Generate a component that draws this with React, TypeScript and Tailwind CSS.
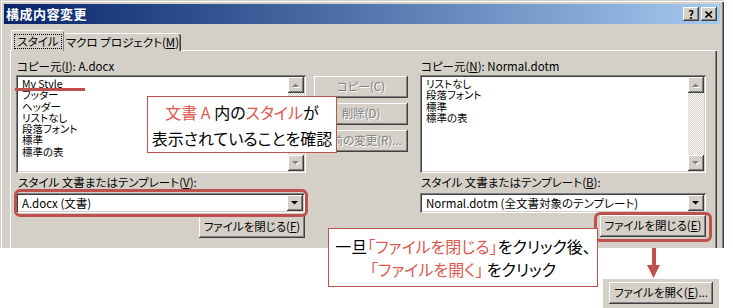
import React from "react";

const raised =
  "shadow-[inset_-1px_-1px_#404040,inset_1px_1px_#ffffff,inset_-2px_-2px_#808080,inset_2px_2px_#d4d0c8]";
const sunken =
  "shadow-[inset_1px_1px_#808080,inset_-1px_-1px_#ffffff,inset_2px_2px_#404040,inset_-2px_-2px_#d4d0c8]";
const dither =
  "bg-[image:repeating-conic-gradient(#ffffff_0_25%,#d4d0c8_0_50%)] bg-[length:2px_2px]";

function Tri({ up, disabled }: { up?: boolean; disabled?: boolean }) {
  const pts = up ? "0,4 7,4 3.5,0.5" : "0,0 7,0 3.5,3.5";
  return (
    <svg width="8" height="5" viewBox="0 0 8 5">
      {disabled && (
        <polygon points={pts} fill="#ffffff" transform="translate(1 1)" />
      )}
      <polygon points={pts} fill={disabled ? "#808080" : "#000000"} />
    </svg>
  );
}

function SmallBtn({ up, disabled }: { up?: boolean; disabled?: boolean }) {
  return (
    <div
      className={`w-[16px] h-[16px] shrink-0 bg-[#d4d0c8] flex items-center justify-center ${raised}`}
    >
      <Tri up={up} disabled={disabled} />
    </div>
  );
}

function ListBox({ items }: { items: string[] }) {
  return (
    <div className={`h-[98px] bg-white p-[2px] flex ${sunken}`}>
      <div className="flex-1 pl-[4px] pt-[1px] text-[10.5px] leading-[11.3px]">
        {items.map((t) => (
          <div key={t} className="h-[11.3px] whitespace-nowrap">
            {t}
          </div>
        ))}
      </div>
      <div className="w-[16px] flex flex-col">
        <SmallBtn up disabled />
        <div className={`flex-1 ${dither}`} />
        <SmallBtn disabled />
      </div>
    </div>
  );
}

function Combo({ text }: { text: string }) {
  return (
    <div className={`h-[20px] bg-white p-[2px] flex items-center ${sunken}`}>
      <div className="flex-1 pl-[4px] text-[11.5px] leading-[16px] whitespace-nowrap">
        {text}
      </div>
      <SmallBtn />
    </div>
  );
}

function Btn({
  children,
  width,
  disabled,
}: {
  children: React.ReactNode;
  width: string;
  disabled?: boolean;
}) {
  return (
    <div
      className={`${width} h-[22px] bg-[#d4d0c8] flex items-center justify-center text-[11.5px] whitespace-nowrap ${raised} ${
        disabled ? "text-[#808080] [text-shadow:1px_1px_#ffffff]" : "text-black"
      }`}
    >
      <span>{children}</span>
    </div>
  );
}

const U = ({ c }: { c: string }) => <span className="underline">{c}</span>;

export default function App() {
  return (
    <div className="relative w-[733px] h-[308px] bg-white overflow-hidden font-['Noto_Sans_CJK_JP',sans-serif] text-black [font-feature-settings:'palt']">
      {/* dialog */}
      <div className="w-[724px] h-[248px] bg-[#d4d0c8] flex flex-col pt-[4px] px-[4px] overflow-hidden shadow-[inset_1px_1px_#d4d0c8,inset_2px_2px_#ffffff,inset_-1px_0_#404040,inset_-2px_0_#808080]">
        <div className="h-[20px] shrink-0 bg-linear-to-r from-[#0a246a] to-[#a6caf0] flex items-center pl-[2px] pr-[3px]">
          <div className="flex-1 text-white font-bold text-[13px] leading-[16px] tracking-[0.5px] [font-feature-settings:normal]">
            構成内容変更
          </div>
          <div className="flex gap-[2px]">
            <div
              className={`w-[16px] h-[14px] bg-[#d4d0c8] flex items-center justify-center text-[11px] font-bold leading-none ${raised}`}
            >
              ?
            </div>
            <div
              className={`w-[16px] h-[14px] bg-[#d4d0c8] flex items-center justify-center ${raised}`}
            >
              <svg width="8" height="7" viewBox="0 0 8 7">
                <path d="M0.5 0.5 L7 6.5 M7 0.5 L0.5 6.5" stroke="#000" strokeWidth="1.6" />
              </svg>
            </div>
          </div>
        </div>

        {/* tabs */}
        <div className="relative z-10 mt-[6px] pl-[7px] flex items-end h-[21px] -mb-px">
          <div className="w-[53px] h-[21px] bg-[#d4d0c8] rounded-t-[2px] border-t border-l border-white shadow-[inset_-1px_0_#808080] flex items-start justify-center pt-[3px]">
            <div className="border border-dotted border-black px-[2px] text-[11.5px] leading-[13px]">
              スタイル
            </div>
          </div>
          <div className="w-[117px] h-[18px] bg-[#d4d0c8] rounded-t-[2px] border-t border-white shadow-[inset_-1px_0_#404040,inset_-2px_0_#808080] pt-[2px] text-center text-[11.5px] leading-[13px] whitespace-nowrap">
            <span>
              マクロ プロジェクト(<U c="M" />)
            </span>
          </div>
        </div>

        {/* panel */}
        <div className="flex-1 ml-[6px] mr-[3px] pl-[6px] pr-[11px] pt-[9px] flex gap-[8px] shadow-[inset_1px_1px_#ffffff,inset_-1px_0_#404040,inset_-2px_0_#808080]">
          <div className="w-[290px] flex flex-col">
            <div className="h-[14px] pl-[1px] text-[11.5px] leading-[14px] whitespace-nowrap">
              コピー元(<U c="I" />): A.docx
            </div>
            <div className="mt-[2px]">
              <ListBox
                items={["My Style", "フッター", "ヘッダー", "リストなし", "段落フォント", "標準", "標準の表"]}
              />
            </div>
            <div className="mt-[2px] h-[14px] pl-[2px] text-[11.5px] leading-[14px] whitespace-nowrap">
              スタイル 文書またはテンプレート(<U c="V" />):
            </div>
            <div className="mt-[4px] w-[289px]">
              <Combo text="A.docx (文書)" />
            </div>
            <div className="mt-[3px] flex justify-end pr-[1px]">
              <Btn width="w-[106px]">
                ファイルを閉じる(<U c="F" />)
              </Btn>
            </div>
          </div>

          <div className="w-[94px] pt-[17px] flex flex-col gap-[5px]">
            <Btn width="w-[94px]" disabled>
              コピー(C)
            </Btn>
            <Btn width="w-[94px]" disabled>
              削除(D)
            </Btn>
            <Btn width="w-[94px]" disabled>
              名前の変更(R)...
            </Btn>
          </div>

          <div className="ml-[4px] w-[286px] flex flex-col">
            <div className="h-[14px] pl-[1px] text-[11.5px] leading-[14px] whitespace-nowrap">
              コピー元(<U c="N" />): Normal.dotm
            </div>
            <div className="mt-[2px]">
              <ListBox items={["リストなし", "段落フォント", "標準", "標準の表"]} />
            </div>
            <div className="mt-[2px] h-[14px] pl-[1px] text-[11.5px] leading-[14px] whitespace-nowrap">
              スタイル 文書またはテンプレート(<U c="B" />):
            </div>
            <div className="mt-[4px]">
              <Combo text="Normal.dotm (全文書対象のテンプレート)" />
            </div>
            <div className="mt-[2px] flex justify-end">
              <Btn width="w-[106px]">
                ファイルを閉じる(<U c="E" />)
              </Btn>
            </div>
          </div>
        </div>
      </div>

      {/* annotations */}
      <div className="absolute left-[15px] top-[88px] w-[70px] h-[3px] bg-[#c0504d]" />
      <div className="absolute left-[14px] top-[189px] w-[294px] h-[28px] border-[3px] border-[#c0504d] rounded-[6px]" />
      <div className="absolute left-[594px] top-[212px] w-[118px] h-[30px] border-[3px] border-[#c0504d] rounded-[6px]" />

      <div className="absolute left-[147px] top-[96px] w-[190px] h-[57px] bg-white border border-[#c0504d] flex flex-col items-center justify-center text-[16px] leading-[26px] whitespace-nowrap">
        <div>
          <span className="text-[#e0584f]">文書 A</span> 内の
          <span className="text-[#e0584f]">スタイル</span>が
        </div>
        <div>表示されていることを確認</div>
      </div>

      <div className="absolute left-[328px] top-[228px] w-[270px] h-[59px] bg-white border border-[#c0504d] flex flex-col items-center justify-center text-[16px] leading-[23px] whitespace-nowrap">
        <div>
          一旦<span className="text-[#e0584f]">「ファイルを閉じる」</span>をクリック後、
        </div>
        <div>
          <span className="text-[#e0584f]">「ファイルを開く」</span> をクリック
        </div>
      </div>

      {/* arrow */}
      <div className="absolute left-[647px] top-[248px] w-[13px] flex flex-col items-center">
        <div className="w-[4px] h-[17px] bg-[#c0504d]" />
        <svg width="13" height="13" viewBox="0 0 13 13">
          <polygon points="0,0 13,0 6.5,13" fill="#c0504d" />
        </svg>
      </div>

      <div className="absolute left-[603px] top-[279px] w-[116px] h-[29px] bg-[#d4d0c8] pl-[6px] pt-[3px]">
        <Btn width="w-[104px]">
          ファイルを開く(<U c="E" />)...
        </Btn>
      </div>
    </div>
  );
}
